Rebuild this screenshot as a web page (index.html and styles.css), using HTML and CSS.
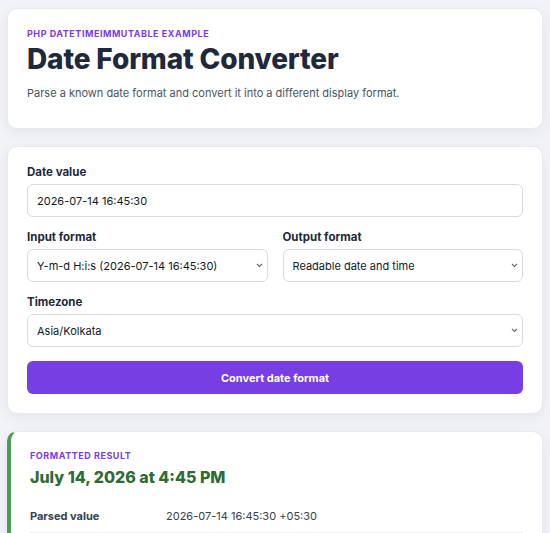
FILE: index.html
```html
<!DOCTYPE html>
<html lang="en">
<head>
    <meta charset="UTF-8">
    <meta name="viewport" content="width=device-width, initial-scale=1.0">
    <title>Date Format Converter</title>
    <link rel="stylesheet" href="styles.css">
</head>
<body>
    <div class="page">
        <!-- 标题卡片 -->
        <header class="card intro">
            <p class="eyebrow">PHP DateTimeImmutable example</p>
            <h1>Date Format Converter</h1>
            <p class="lead">Parse a known date format and convert it into a different display format.</p>
        </header>

        <!-- 表单 -->
        <form class="card form">
            <div class="field">
                <label for="value">Date value</label>
                <input id="value" type="text" value="2026-07-14 16:45:30">
            </div>
            <div class="row">
                <div class="field">
                    <label for="input">Input format</label>
                    <select id="input">
                        <option>Y-m-d H:i:s (2026-07-14 16:45:30)</option>
                    </select>
                </div>
                <div class="field">
                    <label for="output">Output format</label>
                    <select id="output">
                        <option>Readable date and time</option>
                    </select>
                </div>
            </div>
            <div class="field">
                <label for="tz">Timezone</label>
                <select id="tz">
                    <option>Asia/Kolkata</option>
                </select>
            </div>
            <button type="button" class="btn">Convert date format</button>
        </form>

        <!-- 结果 -->
        <section class="card result">
            <p class="eyebrow">Formatted result</p>
            <h2>July 14, 2026 at 4:45 PM</h2>
            <dl class="details">
                <div class="detail">
                    <dt>Parsed value</dt>
                    <dd>2026-07-14 16:45:30 +05:30</dd>
                </div>
            </dl>
        </section>
    </div>
</body>
</html>
```

FILE: styles.css
```css
*{
    margin: 0;
    padding: 0;
    box-sizing: border-box;
}
body{
    background-color: #f1f3f7;
    font-family: Inter, "Liberation Sans", sans-serif;
    color: #1f2937;
}
.page{
    padding: 8px 7px;
}
.card{
    background-color: #fff;
    border: 1px solid #e6e9ef;
    border-radius: 10px;
    box-shadow: 0 4px 14px rgba(15, 23, 42, 0.06);
    padding: 18px 19px 19px;
    margin-bottom: 17px;
}
.eyebrow{
    font-size: 9px;
    font-weight: 700;
    letter-spacing: 0.06em;
    text-transform: uppercase;
    color: #7c3aed;
    line-height: 12px;
}
.intro{
    padding-top: 19px;
    padding-bottom: 27px;
}
h1{
    font-size: 28px;
    font-weight: 800;
    letter-spacing: -0.005em;
    color: #1e293b;
    line-height: 32px;
    margin-top: 3px;
}
.lead{
    font-size: 11px;
    color: #475569;
    margin-top: 10px;
    line-height: 16px;
}
.form{
    display: flex;
    flex-direction: column;
    gap: 13px;
}
.row{
    display: grid;
    grid-template-columns: 1fr 1fr;
    gap: 15px;
}
.field{
    display: flex;
    flex-direction: column;
    gap: 5px;
}
label{
    font-size: 11.5px;
    font-weight: 700;
    color: #1e293b;
    line-height: 14px;
}
input, select{
    font-family: inherit;
    font-size: 11px;
    color: #111827;
    height: 33px;
    border: 1px solid #d5dae3;
    border-radius: 6px;
    background-color: #fff;
    padding: 0 9px;
}
select{
    appearance: none;
    /* 自定义下拉箭头 */
    background-image: url("data:image/svg+xml,%3Csvg xmlns='http://www.w3.org/2000/svg' width='7' height='5' viewBox='0 0 7 5'%3E%3Cpath d='M1 1l2.5 2.5L6 1' fill='none' stroke='%23666' stroke-width='1.1'/%3E%3C/svg%3E");
    background-repeat: no-repeat;
    background-position: right 4px center;
}
.btn{
    font-family: inherit;
    height: 33px;
    margin-top: 1px;
    border: none;
    border-radius: 6px;
    background-color: #763ee3;
    color: #fff;
    font-size: 11px;
    font-weight: 700;
}
.result{
    border-left: 4px solid #4a9e4f;
    padding-left: 19px;
}
.result h2{
    font-size: 16px;
    font-weight: 800;
    color: #2f6b35;
    line-height: 22px;
    margin-top: 4px;
}
.details{
    margin-top: 20px;
}
.detail{
    display: grid;
    grid-template-columns: 136px 1fr;
    font-size: 11px;
    line-height: 16px;
    padding-bottom: 8px;
    border-bottom: 1px solid #eef0f4;
}
dt{
    font-weight: 700;
    color: #334155;
}
dd{
    color: #374151;
}
```
